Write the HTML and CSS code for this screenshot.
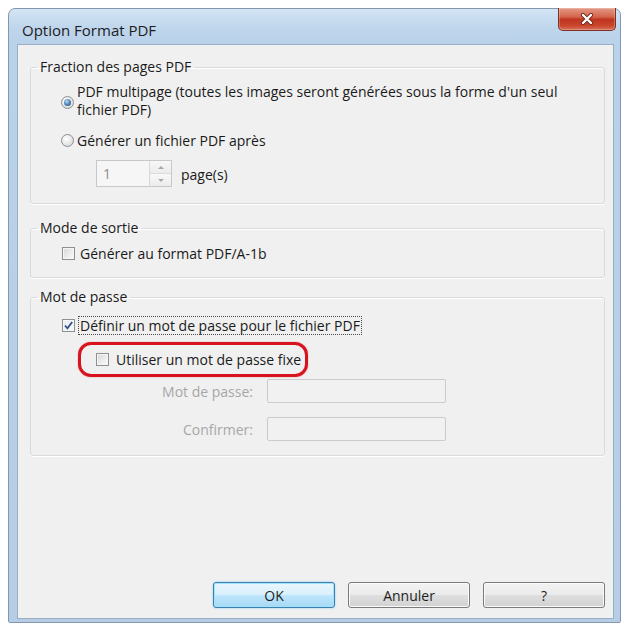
FILE: index.html
```html
<!DOCTYPE html>
<html lang="fr">
<head>
  <meta charset="UTF-8">
  <title>Option Format PDF</title>
  <link rel="stylesheet" href="styles.css">
</head>
<body>
  <div class="window">
    <div class="titlebar">
      <span class="caption">Option Format PDF</span>
      <button class="close" type="button" aria-label="Fermer">
        <svg width="14" height="12" viewBox="0 0 14 12">
          <path d="M3 2 L11 10 M11 2 L3 10" stroke="#6b2418" stroke-width="4" stroke-linecap="round"/>
          <path d="M3 2 L11 10 M11 2 L3 10" stroke="#ffffff" stroke-width="2.4" stroke-linecap="round"/>
        </svg>
      </button>
    </div>

    <div class="client">
      <fieldset class="group group-fraction">
        <legend>Fraction des pages PDF</legend>
        <label class="option option-multi">
          <span class="radio checked"></span>
          <span>PDF multipage (toutes les images seront générées sous la forme d'un seul<br>fichier PDF)</span>
        </label>
        <label class="option option-after">
          <span class="radio"></span>
          <span>Générer un fichier PDF après</span>
        </label>
        <div class="pages-row">
          <div class="spin">
            <span class="spin-value">1</span>
            <div class="spin-buttons">
              <span class="spin-up"></span>
              <span class="spin-down"></span>
            </div>
          </div>
          <span>page(s)</span>
        </div>
      </fieldset>

      <fieldset class="group group-mode">
        <legend>Mode de sortie</legend>
        <label class="option option-check">
          <span class="check"></span>
          <span>Générer au format PDF/A-1b</span>
        </label>
      </fieldset>

      <fieldset class="group group-password">
        <legend>Mot de passe</legend>
        <label class="option option-check">
          <span class="check checked">
            <svg width="11" height="11" viewBox="0 0 11 11">
              <path d="M2 5.5 L4.4 8.3 L9.2 2" fill="none" stroke="#31508a" stroke-width="1.8"/>
            </svg>
          </span>
          <span class="focused">Définir un mot de passe pour le fichier PDF</span>
        </label>
        <div class="highlight">
          <span class="check"></span>
          <span>Utiliser un mot de passe fixe</span>
        </div>
        <div class="fields">
          <span class="field-label">Mot de passe:</span>
          <input class="field" type="password" disabled>
          <span class="field-label">Confirmer:</span>
          <input class="field" type="password" disabled>
        </div>
      </fieldset>

      <div class="actions">
        <button class="btn btn-default" type="button">OK</button>
        <button class="btn" type="button">Annuler</button>
        <button class="btn" type="button">?</button>
      </div>
    </div>
  </div>
</body>
</html>
```

FILE: styles.css
```css
body {
  margin: 0;
  background: #ffffff;
  font-family: "Open Sans", "Noto Sans", sans-serif;
  font-size: 14px;
  color: #1a1a1a;
}
.window {
  margin: 8px 0 0 8px;
  width: 613px;
  height: 615px;
  box-sizing: border-box;
  border: 1px solid #8398b0;
  border-radius: 7px 7px 2px 2px;
  background: linear-gradient(to bottom, #d3e4f4 0, #bed5ec 20px, #b9d1e9 36px, #b6cde5 100%);
  display: flex;
  flex-direction: column;
}
.titlebar {
  height: 35px;
  display: flex;
  justify-content: space-between;
  align-items: flex-start;
  flex-shrink: 0;
}
.caption {
  margin: 11px 0 0 13px;
  font-size: 15px;
  line-height: 20px;
  color: #1c1c1c;
}
.close {
  margin: -1px 4px 0 0;
  width: 58px;
  height: 23px;
  border: 1px solid #7d2f22;
  border-top: none;
  border-radius: 0 0 5px 5px;
  background: linear-gradient(to bottom, #e39a86 0%, #d5654d 40%, #bf3520 52%, #c9462c 80%, #d9705a 100%);
  box-shadow: inset 0 0 0 1px rgba(255, 255, 255, 0.25);
  display: flex;
  align-items: center;
  justify-content: center;
  padding: 0;
}
.client {
  flex: 1;
  margin: 0 6px 3px 8px;
  border: 1px solid #98afc6;
  background: #f0f0f0;
  padding: 12px 8px 10px 12px;
  display: flex;
  flex-direction: column;
}
.group {
  margin: 0;
  padding: 0 8px 0 6px;
  border: 1px solid #d6dbdf;
  border-radius: 3px;
  box-shadow: 0 1px 0 #ffffff, inset 0 1px 0 #ffffff;
  display: flex;
  flex-direction: column;
  align-items: flex-start;
}
.group legend {
  padding: 0 3px;
  line-height: 20px;
}
.group-fraction {
  padding-top: 6px;
  padding-bottom: 16px;
}
.group-mode {
  margin-top: 14px;
  padding-top: 7px;
  padding-bottom: 15px;
}
.group-password {
  margin-top: 9px;
  padding-top: 9px;
  padding-bottom: 14px;
}
.option {
  display: flex;
  align-items: center;
  line-height: 17px;
}
.option-multi {
  margin-left: 24px;
  gap: 3px;
  line-height: 18px;
}
.option-multi .radio {
  margin-top: 3px;
}
.option-after {
  margin: 13px 0 0 24px;
  gap: 3px;
}
.option-check {
  margin-left: 25px;
  gap: 5px;
}
.radio {
  width: 13px;
  height: 13px;
  box-sizing: border-box;
  border: 1px solid #8c8f93;
  border-radius: 50%;
  background: radial-gradient(circle at 40% 35%, #ffffff 0, #e4e4e4 60%, #cfcfcf 100%);
  display: flex;
  align-items: center;
  justify-content: center;
  flex-shrink: 0;
}
.radio.checked::after {
  content: "";
  width: 7px;
  height: 7px;
  border-radius: 50%;
  background: radial-gradient(circle at 40% 35%, #b6dbf7 0, #4c7db0 55%, #23466f 100%);
}
.check {
  width: 13px;
  height: 13px;
  box-sizing: border-box;
  border: 1px solid #8c8f93;
  background: linear-gradient(135deg, #d6d6d6 0, #eeeeee 60%, #fbfbfb 100%);
  box-shadow: inset 0 0 0 1px #f6f6f6;
  display: flex;
  align-items: center;
  justify-content: center;
  flex-shrink: 0;
}
.check.checked {
  background: linear-gradient(135deg, #e8eef6 0, #f8f8f8 100%);
}
.option-check .check.checked + .focused {
  margin-left: -2px;
}
.focused {
  border: 1px dotted #4a4a4a;
  padding: 0 1px;
}
.pages-row {
  margin: 11px 0 0 59px;
  display: flex;
  align-items: center;
  gap: 9px;
}
.spin {
  width: 76px;
  height: 27px;
  box-sizing: border-box;
  border: 1px solid #c6c8cb;
  background: #f6f6f6;
  display: flex;
}
.spin-value {
  flex: 1;
  padding-left: 6px;
  line-height: 25px;
  color: #8d8d8d;
}
.spin-buttons {
  width: 21px;
  border-left: 1px solid #d8d8d8;
  display: flex;
  flex-direction: column;
}
.spin-up,
.spin-down {
  flex: 1;
  display: flex;
  align-items: center;
  justify-content: center;
  background: linear-gradient(to bottom, #f8f8f8, #ececec);
}
.spin-up {
  border-bottom: 1px solid #dcdcdc;
}
.spin-up::after {
  content: "";
  border: 3px solid transparent;
  border-bottom: 3px solid #a9a9a9;
  border-top: none;
}
.spin-down::after {
  content: "";
  border: 3px solid transparent;
  border-top: 3px solid #a9a9a9;
  border-bottom: none;
}
.pages-row > span:last-child {
  margin-top: 2px;
}
.highlight {
  margin: 7px 0 0 41px;
  padding: 6px 4px 6px 15px;
  border: 3px solid #d7141d;
  border-radius: 13px;
  box-shadow: 0 0 1px #d7141d;
  display: flex;
  align-items: center;
  gap: 7px;
  line-height: 17px;
}
.fields {
  margin-top: 2px;
  display: grid;
  grid-template-columns: 216px 179px;
  column-gap: 14px;
  row-gap: 14px;
  align-items: center;
}
.field-label {
  justify-self: end;
  color: #a7a7a7;
}
.field {
  height: 24px;
  box-sizing: border-box;
  border: 1px solid #c9cbce;
  border-radius: 2px;
  background: #f1f1f1;
  margin: 0;
}
.actions {
  margin-top: auto;
  display: flex;
  justify-content: flex-end;
  gap: 13px;
}
.btn {
  width: 122px;
  height: 26px;
  border: 1px solid #7a7a7a;
  border-radius: 3px;
  background: linear-gradient(to bottom, #f3f3f3 0, #ebebeb 48%, #dedede 52%, #d2d2d2 100%);
  box-shadow: inset 0 0 0 1px #fbfbfb;
  font-family: inherit;
  font-size: 14px;
  color: #1e1e1e;
  padding: 0;
}
.btn-default {
  border-color: #3d7fb1;
  background: linear-gradient(to bottom, #eaf6fd 0, #d9f0fc 48%, #bee6fd 52%, #a7d9f5 100%);
  box-shadow: inset 0 0 0 1px #9fe4fb, 0 0 2px #7bc6ee;
}
```
